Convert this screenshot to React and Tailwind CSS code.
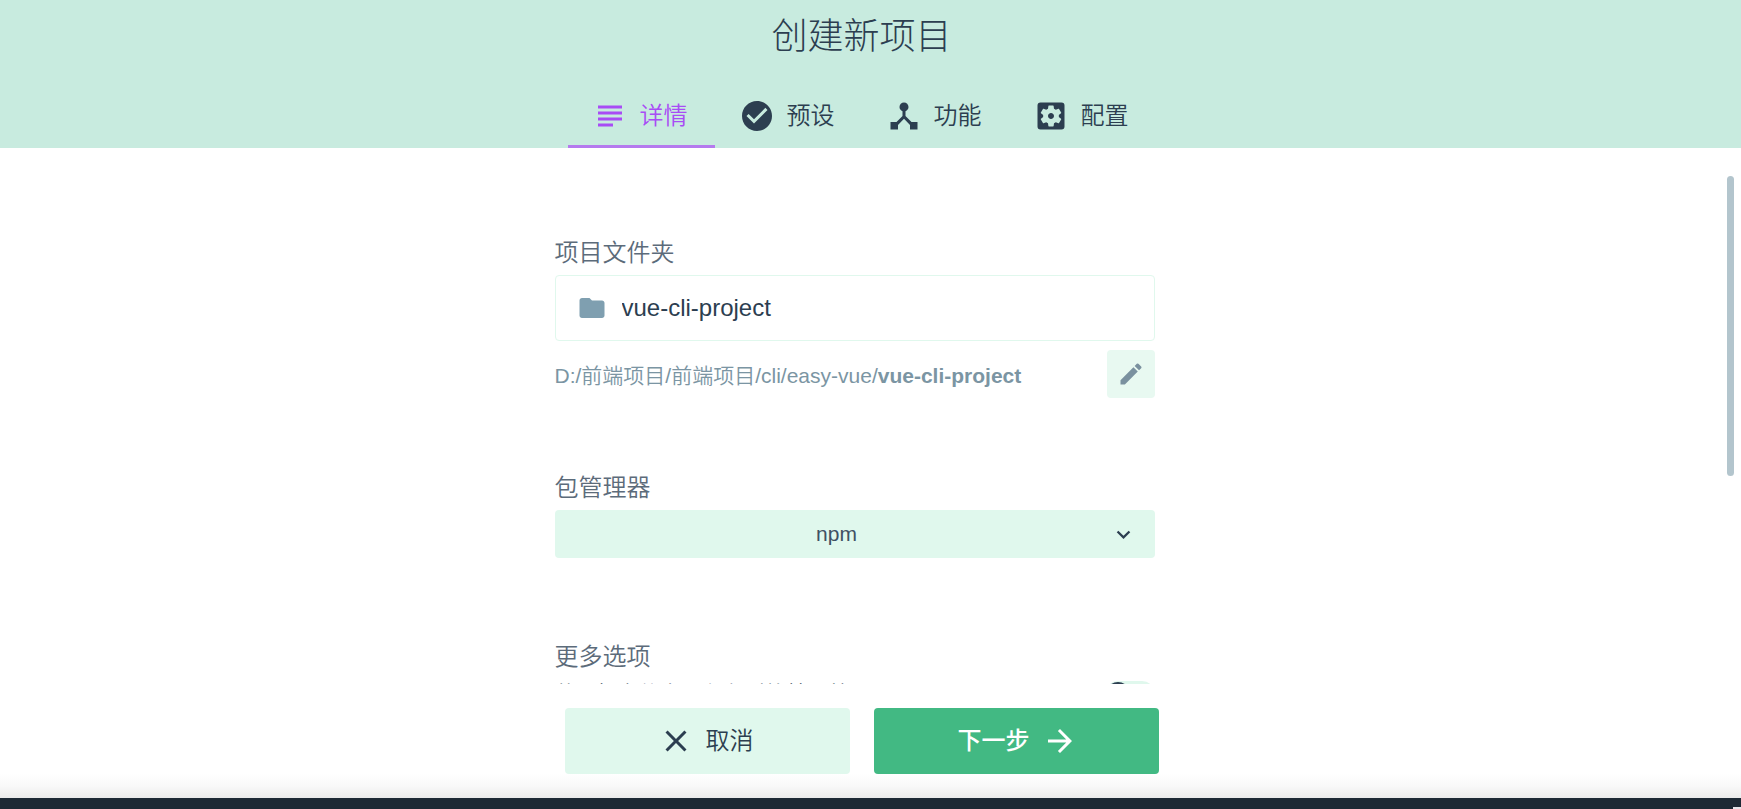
import { MdSubject, MdCheckCircle, MdDeviceHub, MdSettingsApplications, MdFolder, MdEdit, MdKeyboardArrowDown, MdClose, MdArrowForward } from "react-icons/md";

const tabs = [
  { label: "详情", Icon: MdSubject },
  { label: "预设", Icon: MdCheckCircle },
  { label: "功能", Icon: MdDeviceHub },
  { label: "配置", Icon: MdSettingsApplications },
];

export default function App() {
  return (
    <div className="flex h-screen flex-col overflow-hidden bg-white font-['Liberation_Sans','Noto_Sans_CJK_SC',sans-serif] text-2xl text-[#2c3e50]">
      <header className="flex flex-col items-center bg-[#c8ebdf] pr-[18px]">
        <h1 className="pt-1.5 pb-2.5 font-['Noto_Sans_CJK_SC',sans-serif] text-4xl leading-[54px] font-light">创建新项目</h1>
        <nav className="mt-4 flex" role="tablist">
          {tabs.map(({ label, Icon }, i) => (
            <button
              key={label}
              type="button"
              role="tab"
              aria-selected={i === 0}
              className={
                i === 0
                  ? "flex h-[62px] w-[147px] items-center justify-center gap-3 border-b-[3px] border-[#b57aee] pr-[3px] font-[350] text-[#a84cf5]"
                  : "flex h-[62px] w-[147px] items-center justify-center gap-3 border-b-[3px] border-transparent pr-[3px] font-[350]"
              }
            >
              <Icon className="size-9" />
              <span>{label}</span>
            </button>
          ))}
        </nav>
      </header>

      <main className="flex min-h-0 flex-1">
        <div className="flex flex-1 justify-center overflow-hidden pr-3">
          <form className="w-full max-w-[600px]">
            <div className="pt-[85px]">
              <label htmlFor="folder" className="block pb-[3px] leading-[39px] font-[350] text-[#5c6b7a]">项目文件夹</label>
              <div className="flex h-[66px] items-center gap-3 rounded-[4px] border border-[#e0f8ed] px-[18px]">
                <MdFolder className="size-9 p-[3px] text-[#7f9fb0]" />
                <input id="folder" defaultValue="vue-cli-project" className="min-w-0 flex-1 outline-none" />
              </div>
              <div className="mt-[9px] flex items-center justify-between text-[21px] font-[350] text-[#7b95a3]">
                <p className="pt-1">D:/前端项目/前端项目/cli/easy-vue/<b className="font-bold">vue-cli-project</b></p>
                <button type="button" aria-label="编辑" className="grid size-12 place-items-center rounded-[4px] bg-[#e8f9f1] text-[#7a919f]">
                  <MdEdit className="size-7" />
                </button>
              </div>
            </div>
            <div className="pt-[70px]">
              <label htmlFor="manager" className="block pb-[3px] leading-[39px] font-[350] text-[#5c6b7a]">包管理器</label>
              <div className="grid items-center">
                <select id="manager" className="col-start-1 row-start-1 h-12 w-full appearance-none rounded-[4px] bg-[#e0f8ed] pr-9 text-center text-[21px] text-[#3f5163]">
                  <option>npm</option>
                </select>
                <MdKeyboardArrowDown className="pointer-events-none col-start-1 row-start-1 mr-[18px] size-[27px] justify-self-end" />
              </div>
            </div>
            <div className="pt-[79px]">
              <h2 className="leading-[39px] font-[350] text-[#5c6b7a]">更多选项</h2>
              <label className="mt-[5px] flex items-start justify-between text-[21px] font-[350]">
                <span className="leading-[26px]">若目标文件夹已存在则将其覆盖</span>
                <input type="checkbox" className="h-[26px] w-[50px] appearance-none rounded-full bg-[#e0f8ed] p-px before:block before:size-6 before:rounded-full before:bg-[#2c3e50]" />
              </label>
            </div>
          </form>
        </div>
        <div className="pt-7 pr-[7px] pl-[6px]">
          <div className="h-[300px] w-[7px] rounded-full bg-[#b3c5cd]" />
        </div>
      </main>

      <div className="flex justify-center gap-6 bg-white pt-6 pr-[18px]">
        <button type="button" className="flex h-[66px] w-[285px] items-center justify-center gap-3 rounded-[4px] bg-[#e0f8ed] pr-[3px]">
          <MdClose className="size-9" />
          <span className="font-[350]">取消</span>
        </button>
        <button type="button" className="flex h-[66px] w-[285px] items-center justify-center gap-3 rounded-[4px] bg-[#42b983] pl-[3px] text-white">
          <span className="font-medium">下一步</span>
          <MdArrowForward className="size-9" />
        </button>
      </div>
      <div className="h-6 bg-linear-to-b from-white via-[#f9f9f9] to-[#ebebeb]" />
      <footer className="flex h-[11px] items-end justify-end bg-[#1d2935]">
        <span className="h-[2px] w-2 bg-[#e4e4ea]" />
      </footer>
    </div>
  );
}
